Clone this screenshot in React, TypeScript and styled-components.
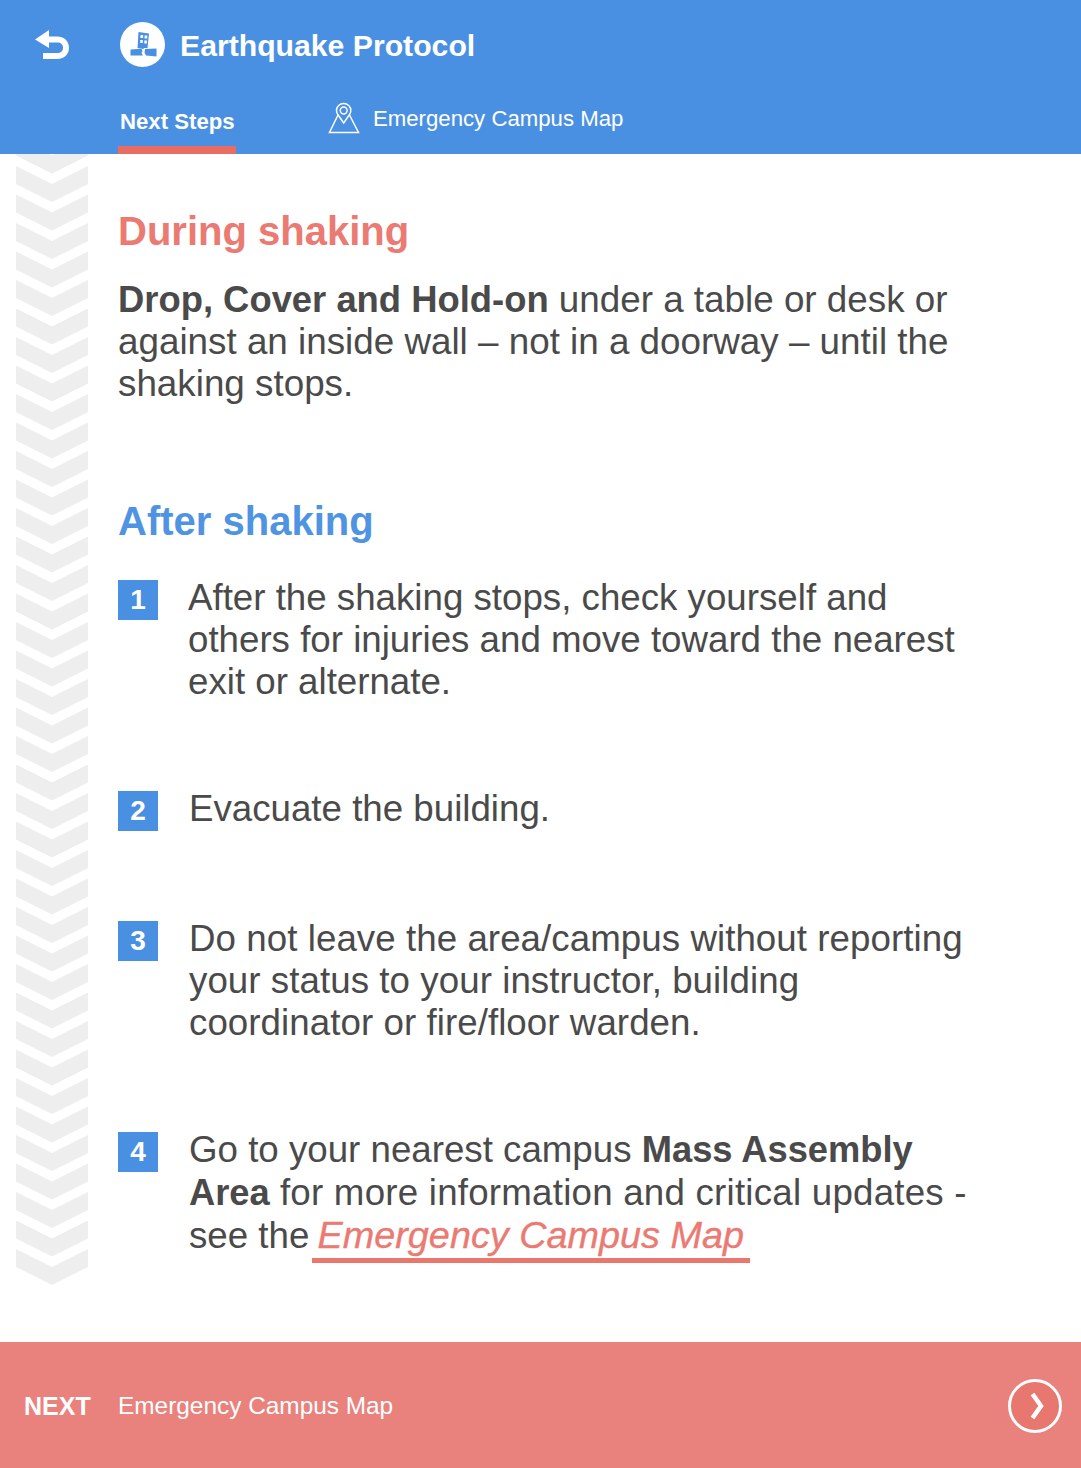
import styled, { createGlobalStyle } from 'styled-components';

const GlobalStyle = createGlobalStyle`
    html, body {
        margin: 0;
        padding: 0;
        background: #fff;
    }
    body {
        font-family: "Liberation Sans", Arial, sans-serif;
        color: #4a4a4a;
    }
`;

const Page = styled.div`
    display: flex;
    flex-direction: column;
    width: 1081px;
    height: 1468px;
    overflow: hidden;
`;

const Header = styled.header`
    flex: none;
    height: 154px;
    box-sizing: border-box;
    padding-top: 22px;
    background: #4a90e2;
    color: #fff;
`;

const TitleRow = styled.div`
    display: flex;
    align-items: center;
    height: 46px;
    padding-left: 34px;
`;

const BackIcon = styled.svg`
    width: 36px;
    height: 30px;
    margin-right: 50px;
`;

const Badge = styled.svg`
    width: 45px;
    height: 45px;
    margin: 0 15px 1px 0;
`;

const Title = styled.h1`
    margin: 0;
    padding-top: 2px;
    font-size: 30.2px;
    font-weight: 700;
`;

const Tabs = styled.nav`
    display: flex;
    align-items: flex-end;
    height: 86px;
    padding-left: 118px;
`;

const ActiveTab = styled.div`
    box-sizing: border-box;
    width: 118px;
    height: 64px;
    padding: 19px 0 0 2px;
    border-bottom: 8px solid #e86c62;
    font-size: 22.2px;
    font-weight: 700;
    line-height: 26px;
`;

const Tab = styled.div`
    display: flex;
    align-items: center;
    height: 64px;
    margin-left: 92px;
    padding-bottom: 6px;
    box-sizing: border-box;
    font-size: 22.2px;
`;

const PinIcon = styled.svg`
    width: 32px;
    height: 32px;
    margin: 0 13px 2px 0;
`;

const Main = styled.main`
    flex: 1;
    display: flex;
    min-height: 0;
`;

const Strip = styled.svg`
    flex: none;
    width: 72px;
    height: 1188px;
    margin: 0 30px 0 16px;
`;

const Content = styled.div`
    flex: 1;
    padding-top: 51px;
`;

const Heading = styled.h2<{ $tone: 'red' | 'blue' }>`
    margin: 0;
    font-size: 40px;
    font-weight: 700;
    line-height: 52px;
    color: ${({ $tone }) => ($tone === 'red' ? '#ea7a72' : '#4f94e3')};
`;

const Lead = styled.p`
    margin: 22px 0 90px;
    font-size: 36.8px;
    line-height: 42px;

    b {
        font-size: 36.4px;
    }
`;

const Steps = styled.ol`
    margin: 30px 0 0;
    padding: 0;
    list-style: none;
`;

const Step = styled.li<{ $gap: number; $leading?: number; $tracking?: number }>`
    display: flex;
    align-items: flex-start;
    margin-bottom: ${({ $gap }) => $gap}px;
    font-size: 36.7px;
    letter-spacing: ${({ $tracking }) => $tracking ?? 0}px;
    line-height: ${({ $leading }) => $leading ?? 42}px;

    b {
        font-size: 36.3px;
    }
`;

const StepNumber = styled.span<{ $top?: number; $right?: number }>`
    flex: none;
    width: 40px;
    height: 40px;
    margin: ${({ $top }) => $top ?? 3}px ${({ $right }) => $right ?? 31}px 0 0;
    background: #4a90e2;
    color: #fff;
    font-size: 28px;
    font-weight: 700;
    line-height: 40px;
    text-align: center;
`;

const WideText = styled.span`
    letter-spacing: 0.23px;
`;

const MapLink = styled.a`
    display: inline-block;
    padding: 0 6px 4px;
    margin-left: -8px;
    border-bottom: 5px solid #e9776e;
    color: #ea7a72;
    font-size: 37.8px;
    font-style: italic;
    line-height: 38px;
    -webkit-text-stroke: 0.35px #ea7a72;
`;

const Footer = styled.footer`
    flex: none;
    display: flex;
    align-items: center;
    height: 126px;
    padding: 0 18px 0 24px;
    background: #e9827d;
    color: #fff;
    box-sizing: border-box;
`;

const NextLabel = styled.strong`
    width: 94px;
    padding-top: 2px;
    font-size: 25px;
    font-weight: 700;
`;

const NextTitle = styled.span`
    flex: 1;
    padding-top: 2px;
    font-size: 24.4px;
`;

const NextButton = styled.svg`
    width: 56px;
    height: 56px;
    margin-top: 2px;
`;

const CHEVRON_COUNT = 42;
const CHEVRON_STEP = 28.5;

export default function App() {
    return (
        <Page>
            <GlobalStyle />
            <Header>
                <TitleRow>
                    <BackIcon viewBox="0 0 36 30">
                        <path d="M1 9.5 L15 0 V6.5 H23 C30 6.5 35 11 35 17.75 C35 24.5 30 29 23 29 H9 V23 H23 C27 23 29 21 29 17.75 C29 14.5 27 12.5 23 12.5 H15 V18 Z" fill="#fff" />
                    </BackIcon>
                    <Badge viewBox="0 0 45 45">
                        <circle cx="22.5" cy="22.5" r="22.5" fill="#fff" />
                        <path d="M18.5 10 L29 11.5 L27.5 26 L24 26 L23.5 27 L17.5 26 Z" fill="#4a90e2" />
                        <path d="M20.5 13 h2.6 v3 h-2.6z M24.6 13.5 h2.6 v3 h-2.6z M20.2 18 h2.6 v3 h-2.6z M24.3 18.5 h2.6 v3 h-2.6z" fill="#fff" />
                        <path d="M10.5 27.5 L21.5 26.8 L22.5 29 L21.5 31 L23 33.5 L10.5 33.5 Z M25 27 L36.5 26.5 L36.5 34.5 L26 33.5 L24.5 30.5 Z" fill="#4a90e2" />
                    </Badge>
                    <Title>Earthquake Protocol</Title>
                </TitleRow>
                <Tabs>
                    <ActiveTab>Next Steps</ActiveTab>
                    <Tab>
                        <PinIcon viewBox="0 0 32 32" fill="none" stroke="#fff" strokeWidth="1.5">
                            <path d="M10 13 L1.5 30.5 H30.5 L21.5 13" />
                            <path d="M15.7 21 L10.2 13 C9 11.6 8.5 10 8.5 8.5 C8.5 4.6 11.7 1.5 15.7 1.5 C19.6 1.5 22.8 4.6 22.8 8.5 C22.8 10 22.3 11.6 21.2 13 Z" />
                            <circle cx="15.7" cy="8.5" r="3.4" />
                        </PinIcon>
                        Emergency Campus Map
                    </Tab>
                </Tabs>
            </Header>
            <Main>
                <Strip viewBox="0 0 72 1188">
                    {Array.from({ length: CHEVRON_COUNT }, (_, i) => {
                        const y = 12 + CHEVRON_STEP * (i - 3);
                        return <polygon key={i} points={`0,${y} 36,${y + 18} 72,${y} 72,${y + 18} 36,${y + 36} 0,${y + 18}`} fill="#eeeeee" />;
                    })}
                </Strip>
                <Content>
                    <Heading $tone="red">During shaking</Heading>
                    <Lead>
                        <b>Drop, Cover and Hold-on</b> under a table or desk or<br />
                        against an inside wall – not in a doorway – until the<br />
                        shaking stops.
                    </Lead>
                    <Heading $tone="blue">After shaking</Heading>
                    <Steps>
                        <Step $gap={85}>
                            <StepNumber $right={30}>1</StepNumber>
                            <span>
                                After the shaking stops, check yourself and<br />
                                others for injuries and move toward the nearest<br />
                                exit or alternate.
                            </span>
                        </Step>
                        <Step $gap={87}>
                            <StepNumber>2</StepNumber>
                            <span>Evacuate the building.</span>
                        </Step>
                        <Step $gap={84} $tracking={0.06}>
                            <StepNumber>3</StepNumber>
                            <span>
                                Do not leave the area/campus without reporting<br />
                                your status to your instructor, building<br />
                                coordinator or fire/floor warden.
                            </span>
                        </Step>
                        <Step $gap={0} $leading={43}>
                            <StepNumber $top={4}>4</StepNumber>
                            <span>
                                Go to your nearest campus <b>Mass Assembly</b><br />
                                <b>Area</b> <WideText>for more information and critical updates -</WideText><br />
                                see the <MapLink>Emergency Campus Map</MapLink>
                            </span>
                        </Step>
                    </Steps>
                </Content>
            </Main>
            <Footer>
                <NextLabel>NEXT</NextLabel>
                <NextTitle>Emergency Campus Map</NextTitle>
                <NextButton viewBox="0 0 56 56">
                    <circle cx="28" cy="28" r="25.5" fill="#e8776f" stroke="#fff" strokeWidth="3" />
                    <path d="M25.5 16 L34 28 L25.5 40" fill="none" stroke="#fff" strokeWidth="4.5" />
                </NextButton>
            </Footer>
        </Page>
    );
}
